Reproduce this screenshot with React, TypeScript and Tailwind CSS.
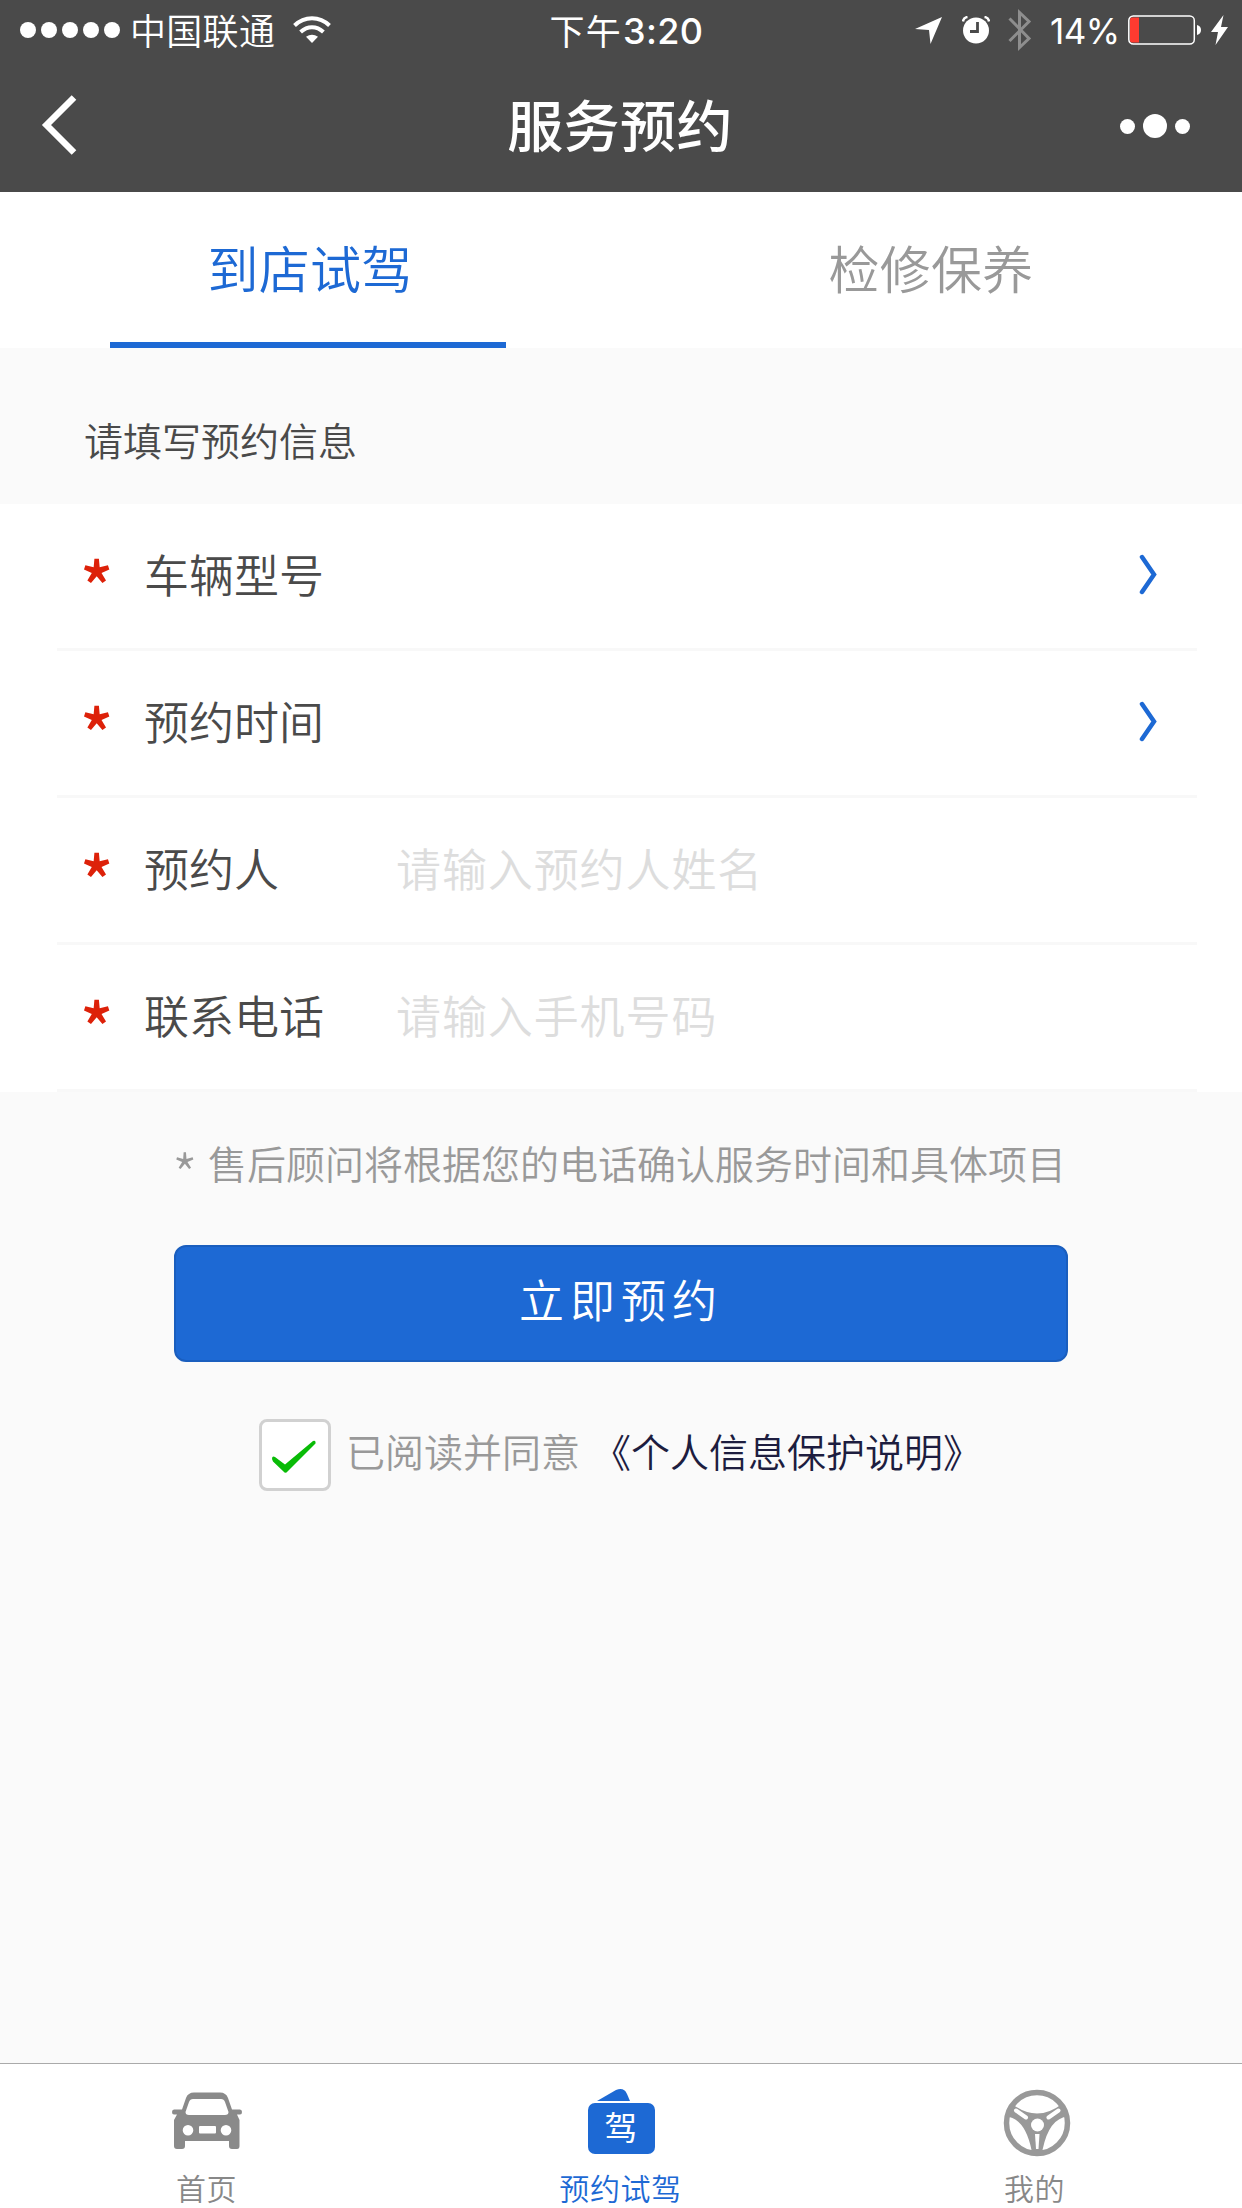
import React, { useState } from 'react';

const TABS = ['到店试驾', '检修保养'];

const FIELDS = [
  { label: '车辆型号', type: 'select' },
  { label: '预约时间', type: 'select' },
  { label: '预约人', type: 'input', placeholder: '请输入预约人姓名' },
  { label: '联系电话', type: 'input', placeholder: '请输入手机号码' },
];

function StatusBar() {
  return (
    <div className="grid h-15 grid-cols-3 items-center text-[36px] leading-none font-[350]">
      <div className="flex items-center pl-5">
        <div className="flex gap-[5px]">
          {[0, 1, 2, 3, 4].map((i) => (
            <span key={i} className="h-4 w-4 rounded-full bg-white" />
          ))}
        </div>
        <span className="ml-[10px] pb-[2px] tracking-[0.3px]">中国联通</span>
        <svg className="ml-[18px]" width="38" height="28" viewBox="0 0 38 28" fill="none" stroke="white" strokeWidth="4">
          <path d="M1.5 9.5C11.5-.2 26.500-.2 36.500 9.500" />
          <path d="M7.600 16C14.500 9.600 23.500 9.600 30.400 16" />
          <path d="M13 20.800Q19 16.500 25 20.800L19 27Z" fill="white" stroke="none" />
        </svg>
      </div>
      <div className="flex items-center justify-center pl-[11px] font-medium">
        <span className="pb-[2px] text-[35px] font-normal tracking-[1.2px]">下午</span>
        <span className="ml-[1px] pt-[2px] font-[Inter] text-[36px] tracking-[0.4px]">3:20</span>
      </div>
      <div className="flex items-center justify-end pr-[14px]">
        <svg width="27" height="27" viewBox="0 0 27 27" fill="white">
          <path d="M27 0L15.500 27L14 13L0 12Z" />
        </svg>
        <svg className="ml-5" width="28" height="28" viewBox="0 0 28 28">
          <circle cx="14" cy="14.500" r="13" fill="white" />
          <path d="M15.500 6v9.500H8" fill="none" stroke="#4a4a4a" strokeWidth="2.800" />
          <path d="M1 5.500Q1.500 1.500 5.500 1M22.500 1Q26.500 1.500 27 5.500" fill="none" stroke="white" strokeWidth="2.500" />
        </svg>
        <svg className="ml-[18px]" width="24" height="42" viewBox="0 0 24 42" fill="none" stroke="#8e8e8e" strokeWidth="3">
          <path d="M1.500 9.500L21 29.500L11.500 38.500V3.500L21 12.500L1.500 32" />
        </svg>
        <span className="ml-[18px] w-[68px] pt-[2px] font-[Inter] text-[35px] font-normal tracking-[-0.5px]">14%</span>
        <svg className="ml-[10px]" width="74" height="30" viewBox="0 0 74 30">
          <rect x="0.800" y="1" width="65.500" height="28" rx="4.500" fill="none" stroke="white" strokeWidth="1.500" />
          <path d="M4 2.500H11V27.500H4Q2 27.500 2 25.500V4.500Q2 2.500 4 2.500Z" fill="#ff3b30" />
          <path d="M69 10Q73 11 73 15T69 20Z" fill="white" />
        </svg>
        <svg className="ml-[9px]" width="17" height="30" viewBox="0 0 17 30" fill="white">
          <path d="M12.500 0L0 17H7L4.500 30L17 12H10Z" />
        </svg>
      </div>
    </div>
  );
}

function NavBar() {
  return (
    <div className="grid h-[132px] grid-cols-3 items-center">
      <svg className="mb-[2px] ml-[41px]" width="36" height="60" viewBox="0 0 36 60" fill="none" stroke="white" strokeWidth="6.500">
        <path d="M33 2.500L5.500 30L33 57.500" />
      </svg>
      <h1 className="pr-[2px] pb-[6px] text-center text-[56px] leading-none font-medium tracking-[0.4px] whitespace-nowrap">服务预约</h1>
      <div className="flex items-center justify-end gap-2 pr-[52px]">
        <span className="h-[15px] w-[15px] rounded-full bg-white" />
        <span className="h-6 w-6 rounded-full bg-white" />
        <span className="h-[15px] w-[15px] rounded-full bg-white" />
      </div>
    </div>
  );
}

function CarIcon() {
  return (
    <svg width="70" height="68" viewBox="0 0 70 68" fill="#8a8a8a">
      <path
        fillRule="evenodd"
        d="M22 3.500H48Q54 3.500 56 9L60 20.500H68Q70 20.500 70 23T68 25.500H65L67.500 31V57Q67.500 60 65 60H60Q57 60 57 57V52H13V57Q13 60 10 60H5Q2 60 2 57V31L5 25.500H2Q0 25.500 0 23T2 20.500H10L14 9Q16 3.500 22 3.500ZM21 10Q18 10 17 13L13.500 23Q13.500 26 17 26H53Q56.500 26 56.500 23L53 13Q52 10 49 10ZM16 36A5.300 5.300 0 1 0 16 46.600A5.300 5.300 0 1 0 16 36ZM54 36A5.300 5.300 0 1 0 54 46.600A5.300 5.300 0 1 0 54 36ZM28 37Q27 37 27 38V43.500Q27 44.500 28 44.500H43Q44 44.500 44 43.500V38Q44 37 43 37Z"
      />
    </svg>
  );
}

function WalletIcon() {
  return (
    <div className="flex h-[68px] w-[67px] flex-col">
      <svg width="67" height="12" viewBox="0 0 67 12" fill="#1d69d4">
        <path d="M9 12L28 1Q36-2 39 5L42 12Z" />
      </svg>
      <span className="mt-[2px] flex h-[51px] items-center justify-center rounded-[7px] bg-[#1d69d4] pb-[5px] text-[33px] leading-none font-normal text-white">
        驾
      </span>
    </div>
  );
}

function WheelIcon() {
  return (
    <svg className="ml-[3px]" width="68" height="68" viewBox="0 0 68 68" fill="none">
      <path d="M9 15Q34 34 59 15L65 27.500Q46 29 39.500 61L36 65H32L28.500 61Q22 29 3 27.500Z" fill="#999" />
      <circle cx="34" cy="34" r="30.500" stroke="#999" strokeWidth="5.500" />
      <circle cx="34.500" cy="36" r="6.500" fill="white" />
      <path d="M13 21.500L23 28.500M55.500 21.500L45.500 28.500" stroke="white" strokeWidth="4" strokeLinecap="round" />
      <path d="M32 45H36.500L35.500 60H33Z" fill="white" />
    </svg>
  );
}

const NAV_ITEMS = [
  { label: '首页', icon: <CarIcon />, color: 'text-[#888]' },
  { label: '预约试驾', icon: <WalletIcon />, color: 'text-[#1d69d4]' },
  { label: '我的', icon: <WheelIcon />, color: 'text-[#888]' },
];

export default function App() {
  const [activeTab, setActiveTab] = useState(0);
  const [agreed, setAgreed] = useState(true);

  return (
    <div className="flex h-[2208px] w-[1242px] flex-col overflow-hidden bg-[#fafafa] font-['Noto_Sans_CJK_SC',sans-serif] font-[350] text-[#4a4a4a]">
      <header className="h-48 shrink-0 bg-[#4a4a4a] text-white">
        <StatusBar />
        <NavBar />
      </header>

      {/* Tabs */}
      <div className="grid h-[156px] shrink-0 grid-cols-2 bg-white">
        {TABS.map((tab, i) => (
          <button
            key={tab}
            onClick={() => setActiveTab(i)}
            className={`mr-[5px] flex w-[396px] items-center justify-center justify-self-center border-b-6 pt-[1px] pl-[4px] text-[51px] leading-none tracking-[0.2px] ${
              activeTab === i ? 'border-[#1d69d4] text-[#1d69d4]' : 'border-transparent text-[#999]'
            }`}
          >
            {tab}
          </button>
        ))}
      </div>

      <h2 className="flex h-[156px] shrink-0 items-center pt-[27px] pl-[84px] text-[39px] leading-none">请填写预约信息</h2>

      {/* Form */}
      <div className="shrink-0 bg-white pr-[45px] pl-[57px]">
        {FIELDS.map((field) => (
          <div key={field.label} className="flex h-[147px] items-center border-b-3 border-[#f8f8f8] pr-[39px] pl-[23px] text-[45px] leading-none">
            <span className="w-[64px] pt-[16px] text-[69px] font-medium text-[#dd2109]">*</span>
            <span className="w-[252px] pb-[6px]">{field.label}</span>
            {field.type === 'input' ? (
              <input
                className="w-[600px] pb-[6px] leading-none tracking-[0.9px] outline-none placeholder:text-[#ddd]"
                placeholder={field.placeholder}
              />
            ) : (
              <svg className="mb-[2px] ml-auto" width="20" height="42" viewBox="0 0 20 42" fill="none" stroke="#1d69d4" strokeWidth="4.500" strokeLinecap="round">
                <path d="M4 3L16 20.500L4 38" />
              </svg>
            )}
          </div>
        ))}
      </div>

      <p className="mt-[52px] flex h-10 shrink-0 items-center pl-[172px] text-[39px] leading-none text-[#999]">
        <span className="w-[36px] pt-[18px] text-[58px] font-light">*</span>
        <span className="pb-[3px]">售后顾问将根据您的电话确认服务时间和具体项目</span>
      </p>

      <button className="mx-auto mt-[61px] flex h-[117px] w-[894px] shrink-0 items-center justify-center rounded-xl border-2 border-[#1a5ebe] bg-[#1d69d4] pb-[10px] text-[45px] leading-none tracking-[6px] text-white">
        立即预约
      </button>

      <div className="mt-[57px] ml-[259px] flex h-[72px] shrink-0 items-center text-[39px] leading-none">
        <button
          onClick={() => setAgreed(!agreed)}
          className="flex h-[72px] w-[72px] items-center justify-center rounded-lg border-3 border-[#d1d1d1] bg-white pt-[4px] pr-[2px]"
        >
          {agreed && (
            <svg width="46" height="34" viewBox="0 0 46 34" fill="#09bb07">
              <path d="M1 19Q1 15.500 4 17L14 24.500L42 1Q45 0 44.500 3.500L16.500 31.500Q14.500 34 12.500 31.500L2 21.500Z" />
            </svg>
          )}
        </button>
        <span className="ml-[15px] pb-[9px] text-[#999]">已阅读并同意</span>
        <a className="ml-[12px] pb-[9px] text-[#1d1d3f]">《个人信息保护说明》</a>
      </div>

      {/* Bottom navigation */}
      <nav className="mt-auto grid h-[145px] shrink-0 grid-cols-3 border-t border-[#aaa] bg-white pt-[25px]">
        {NAV_ITEMS.map((item) => (
          <div key={item.label} className={`flex flex-col items-center text-[30px] leading-none tracking-[0.6px] ${item.color}`}>
            {item.icon}
            <span className="mt-[15px] pr-[1px]">{item.label}</span>
          </div>
        ))}
      </nav>
    </div>
  );
}
